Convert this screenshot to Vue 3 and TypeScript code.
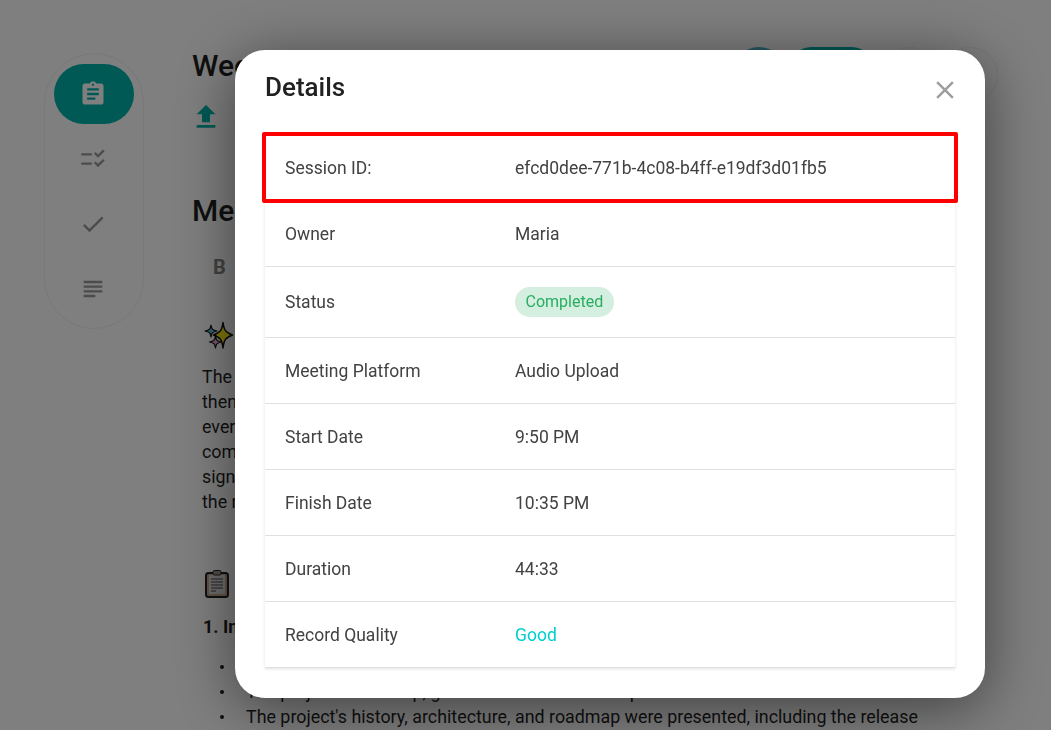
<script setup lang="ts">
const rows = [
  { label: 'Owner', value: 'Maria' },
  { label: 'Status', value: 'Completed', kind: 'chip' },
  { label: 'Meeting Platform', value: 'Audio Upload' },
  { label: 'Start Date', value: '9:50 PM' },
  { label: 'Finish Date', value: '10:35 PM' },
  { label: 'Duration', value: '44:33' },
  { label: 'Record Quality', value: 'Good', kind: 'good' },
]
const paragraph = ['The team', 'then', 'every', 'come', 'signed', 'the release']
const bullets = [
  'The',
  "The project's roadmap, goals and the team were presented",
  "The project's history, architecture, and roadmap were presented, including the release",
]
</script>

<template>
  <div class="page">
    <aside class="rail">
      <button class="rail-btn active">
        <svg viewBox="0 0 24 24" width="28" height="28"><path fill="#fff" d="M19 3h-4.180C14.400 1.840 13.300 1 12 1s-2.400.840-2.820 2H5c-1.100 0-2 .900-2 2v14c0 1.100.900 2 2 2h14c1.100 0 2-.900 2-2V5c0-1.100-.900-2-2-2zm-7 0c.550 0 1 .450 1 1s-.450 1-1 1-1-.450-1-1 .450-1 1-1zm2 14H7v-2h7v2zm3-4H7v-2h10v2zm0-4H7V7h10v2z"/></svg>
      </button>
      <button class="rail-btn">
        <svg viewBox="0 0 24 24" width="28" height="28"><path fill="#999" d="M2 7h9v2H2zM2 15h9v2H2z"/><path fill="#999" d="M16.340 11l-3.540-3.540 1.410-1.410 2.120 2.120 4.240-4.240L22 5.340 16.340 11zm0 8l-3.540-3.540 1.410-1.410 2.120 2.120 4.240-4.240L22 13.340 16.340 19z"/></svg>
      </button>
      <button class="rail-btn">
        <svg viewBox="0 0 24 24" width="28" height="28"><path fill="#999" d="M9 16.170 4.830 12l-1.420 1.410L9 19 21 7l-1.410-1.410z"/></svg>
      </button>
      <button class="rail-btn">
        <svg viewBox="0 0 24 24" width="28" height="28"><path fill="#999" d="M14 17H4v2h10v-2zm6-8H4v2h16V9zM4 15h16v-2H4v2zM4 5v2h16V5H4z"/></svg>
      </button>
    </aside>

    <main class="content">
      <header class="top">
        <h1 class="title">Week</h1>
        <div class="top-actions">
          <span class="dot blue"></span>
          <span class="pill-btn"></span>
          <span class="dot outline first"></span>
          <span class="dot outline"></span>
        </div>
      </header>
      <div class="upload">
        <svg viewBox="0 0 24 24" width="32" height="32"><path fill="#00b2a8" d="M9 16h6v-6h4l-7-7-7 7h4v6zm-4 2h14v2H5v-2z"/></svg>
      </div>
      <h2 class="section">Meeting</h2>
      <div class="toolbar">B</div>
      <div class="emoji-row">
        <svg viewBox="0 0 30 30" width="30" height="30">
          <path d="M19 1.500c1 7.500 2.500 10 9.500 12.500-7 2.500-8.500 5-9.500 13-1-8-2.500-10.500-9.500-13 7-2.500 8.500-5 9.500-12.500z" fill="#ffeb14" stroke="#111" stroke-width="1.500" stroke-linejoin="round"/>
          <path d="M7 4c.5 3.800 1.200 5 6 6-4.800 1-5.500 2.200-6 6-.5-3.800-1.200-5-6-6 4.800-1 5.500-2.200 6-6z" fill="#5cc8ea" stroke="#111" stroke-width="1.200" stroke-linejoin="round"/>
          <path d="M11.500 15c.5 3.800 1.200 5 6 6-4.800 1-5.500 2.200-6 6-.5-3.800-1.200-5-6-6 4.800-1 5.500-2.200 6-6z" fill="#f5a8d8" stroke="#111" stroke-width="1.200" stroke-linejoin="round"/>
        </svg>
      </div>
      <div class="para">
        <div v-for="line in paragraph" :key="line">{{ line }}</div>
      </div>
      <div class="emoji-row second">
        <svg viewBox="0 0 28 30" width="28" height="30">
          <rect x="3" y="5" width="22" height="24" rx="2.500" fill="#c8a68c" stroke="#222" stroke-width="2"/>
          <rect x="6" y="7" width="16" height="19" fill="#d8d8d8"/>
          <path d="M8 11h12M8 14h12M8 17h12M8 20h12M8 23h5" stroke="#444" stroke-width="1"/>
          <rect x="10" y="2.500" width="8" height="4.500" rx="1.500" fill="#999" stroke="#222"/>
        </svg>
      </div>
      <h3 class="sub">1. Intro</h3>
      <ul class="list">
        <li v-for="b in bullets" :key="b">{{ b }}</li>
      </ul>
    </main>

    <div class="overlay">
      <section class="modal">
        <div class="modal-head">
          <h2 class="modal-title">Details</h2>
          <button class="close" aria-label="Close">
            <svg viewBox="0 0 24 24" width="30" height="30"><path fill="#9e9e9e" d="M19 6.410 17.590 5 12 10.590 6.410 5 5 6.410 10.590 12 5 17.590 6.410 19 12 13.410 17.590 19 19 17.590 13.410 12z"/></svg>
          </button>
        </div>
        <div class="table">
          <div class="row highlight">
            <span class="label">Session ID:</span>
            <span class="value">efcd0dee-771b-4c08-b4ff-e19df3d01fb5</span>
          </div>
          <div v-for="r in rows" :key="r.label" class="row" :class="{ tall: r.kind === 'chip' }">
            <span class="label">{{ r.label }}</span>
            <span v-if="r.kind === 'chip'" class="chip">{{ r.value }}</span>
            <span v-else class="value" :class="{ good: r.kind === 'good' }">{{ r.value }}</span>
          </div>
        </div>
      </section>
    </div>
  </div>
</template>

<style>
html, body { margin: 0; height: 100%; overflow: hidden; background: #fff; }
</style>

<style scoped>
.page {
  position: relative;
  height: 730px;
  overflow: hidden;
  display: flex;
  align-items: flex-start;
  padding: 53px 0 0 44px;
  box-sizing: border-box;
  font-family: Roboto, "Liberation Sans", sans-serif;
  color: #1f1f1f;
  background: #fff;
}
.rail {
  flex: none;
  width: 100px;
  box-sizing: border-box;
  padding: 10px 9px 9px;
  border: 1px solid #f0f0f0;
  border-radius: 50px;
  display: flex;
  flex-direction: column;
  gap: 5px;
}
.rail-btn {
  flex: none;
  width: 80px;
  height: 60px;
  padding: 0 2px 0 0;
  border: 0;
  background: none;
  border-radius: 30px;
  display: flex;
  align-items: center;
  justify-content: center;
}
.rail-btn.active { background: #00b2a8; }
.content { flex: none; width: 806px; margin-left: 48px; }
.top { display: flex; justify-content: space-between; height: 48px; align-items: flex-start; }
.title { margin: 0; font-size: 30px; font-weight: 500; line-height: 26px; }
.top-actions { display: flex; align-items: flex-start; gap: 4px; margin-top: -6px; }
.dot { width: 56px; height: 56px; border-radius: 50%; display: block; }
.blue { background: #4fb0c8; }
.outline { border: 1px solid #f0f0f0; box-sizing: border-box; }
.outline.first { margin-left: 6px; }
.pill-btn { width: 81px; height: 40px; border-radius: 20px; background: #00b2a8; display: block; }
.upload { height: 95px; margin-left: -2px; }
.upload svg { display: block; }
.section { margin: 0; font-size: 30px; font-weight: 500; line-height: 30px; }
.toolbar { margin: 29px 0 0 21px; font-size: 20px; font-weight: 700; color: #858585; line-height: 24px; }
.emoji-row { margin-top: 42px; margin-left: 12px; height: 30px; }
.emoji-row svg { display: block; }
.emoji-row.second { margin-top: 54px; margin-left: 11px; }
.para { margin: 13px 0 0 10px; font-size: 17.850px; line-height: 25px; white-space: nowrap; }
.sub { margin: 17px 0 0 11px; font-size: 18px; font-weight: 700; line-height: 24px; }
.list { margin: 15px 0 0; padding: 0 0 0 54px; list-style: none; font-size: 17.850px; line-height: 25px; white-space: nowrap; }
.list li { position: relative; }
.list li::before {
  content: "";
  position: absolute;
  left: -26px;
  top: 11px;
  width: 4px;
  height: 4px;
  border-radius: 50%;
  background: #1f1f1f;
}
.overlay {
  position: fixed;
  inset: 0;
  background: rgba(0, 0, 0, 0.5);
}
.modal {
  position: absolute;
  left: 235px;
  top: 50px;
  width: 750px;
  height: 648px;
  box-sizing: border-box;
  padding: 0 30px;
  background: #fff;
  border-radius: 30px;
  box-shadow: 0 10px 60px rgba(0, 0, 0, 0.5);
}
.modal-head { display: flex; justify-content: space-between; align-items: center; height: 84px; box-sizing: border-box; padding-bottom: 14px; }
.modal-title { margin: 0; font-size: 26px; font-weight: 500; color: #212121; padding-top: 3px; }
.close { border: 0; background: none; padding: 0; width: 30px; height: 30px; margin-top: 10px; margin-right: -5px; }
.close svg { display: block; }
.table {
  box-shadow: 0 1px 3px rgba(0,0,0,.12);
  background: #fff;
}
.row {
  position: relative;
  display: flex;
  align-items: center;
  height: 66px;
  box-sizing: border-box;
  padding-left: 20px;
  border-bottom: 1px solid #e0e0e0;
  font-size: 17.500px;
  color: #424242;
}
.row.tall { height: 71px; }
.row.highlight { height: 67px; border-bottom: 0; }
.highlight::after {
  content: "";
  position: absolute;
  left: -3px;
  right: -3px;
  top: -2px;
  bottom: -2px;
  border: 4px solid #ff0000;
  border-radius: 2px;
}
.label { width: 230px; flex: none; }
.value.good { color: #00cfcf; }
.chip {
  display: inline-flex;
  align-items: center;
  box-sizing: border-box;
  height: 30px;
  padding: 0 10.500px 1px;
  border-radius: 15px;
  background: #d4eee0;
  color: #27ae60;
  font-size: 16px;
}
</style>
